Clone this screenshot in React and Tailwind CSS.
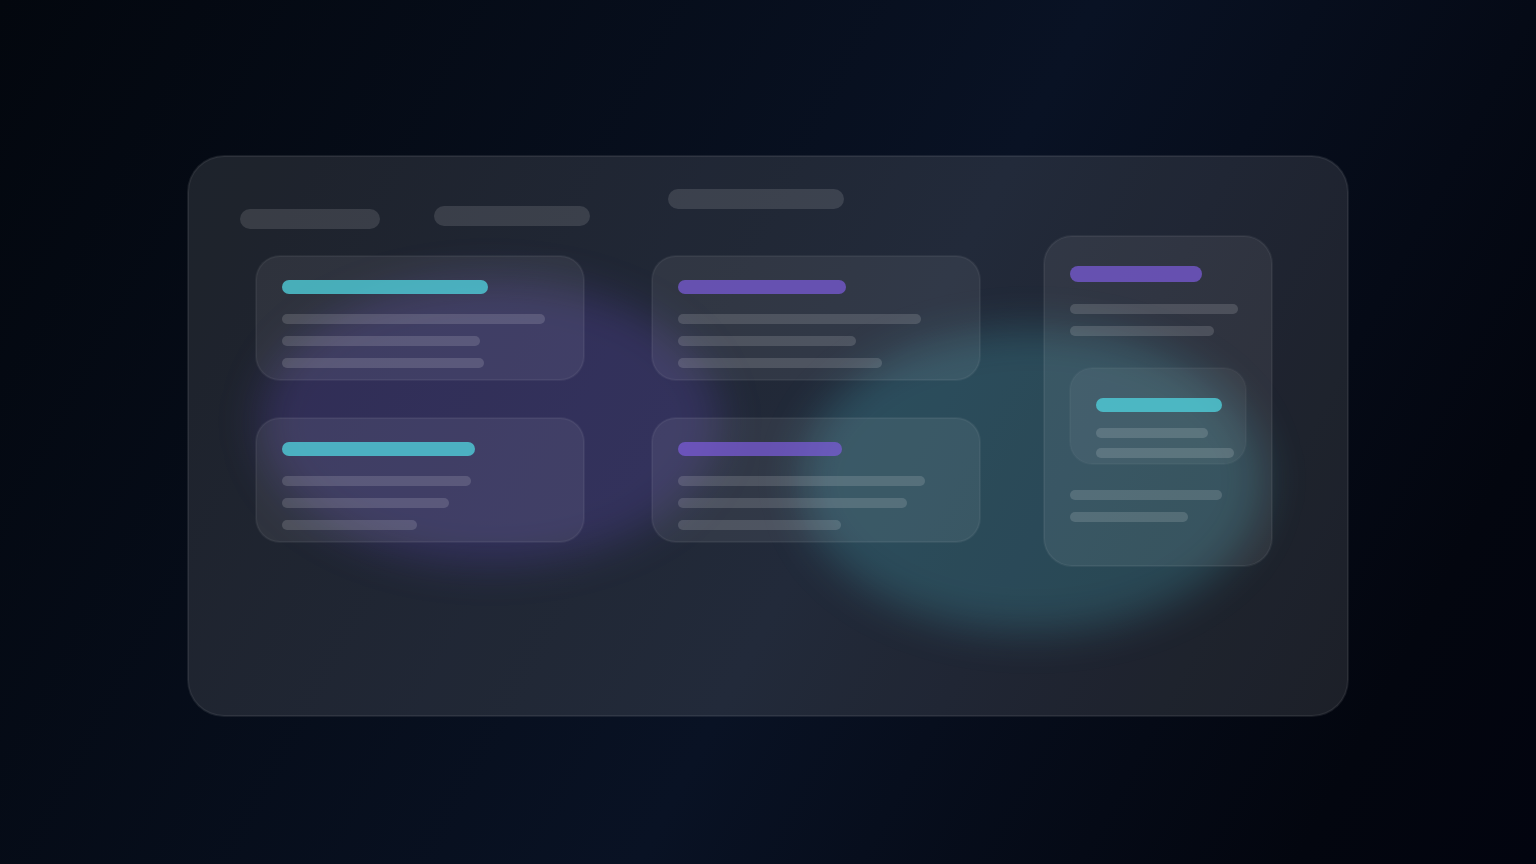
const bars = {
  cyan: "bg-[#4fd1dc]/78",
  purple: "bg-[#7c5cdb]/72",
  line: "bg-white/14",
};

function Bar({ tone = "line", className }) {
  return <div className={`rounded-full ${bars[tone]} ${className}`} />;
}

const cards = [
  { tone: "cyan", title: "w-[206px]", lines: ["w-[263px]", "w-[198px]", "w-[202px]"] },
  { tone: "purple", title: "w-[168px]", lines: ["w-[243px]", "w-[178px]", "w-[204px]"] },
  { tone: "cyan", title: "w-[193px]", lines: ["w-[189px]", "w-[167px]", "w-[135px]"] },
  { tone: "purple", title: "w-[164px]", lines: ["w-[247px]", "w-[229px]", "w-[163px]"] },
];

function Card({ tone, title, lines }) {
  return (
    <article className="h-[124px] rounded-3xl bg-white/7 px-[26px] pt-6 ring ring-white/5 inset-ring inset-ring-white/5">
      <Bar tone={tone} className={`h-3.5 ${title}`} />
      <div className="mt-5 flex flex-col gap-3">
        {lines.map((width) => (
          <Bar key={width} className={`h-2.5 ${width}`} />
        ))}
      </div>
    </article>
  );
}

function Sidebar() {
  return (
    <aside className="mt-[80px] h-[330px] w-[228px] shrink-0 rounded-[28px] bg-white/7 px-[26px] pt-[30px] ring ring-white/5 inset-ring inset-ring-white/6">
      <Bar tone="purple" className="h-4 w-[132px]" />
      <div className="mt-[22px] flex flex-col gap-3">
        <Bar className="h-2.5 w-[168px]" />
        <Bar className="h-2.5 w-[144px]" />
      </div>
      <div className="mt-8 h-24 rounded-[22px] bg-white/5 pt-[30px] pl-[26px] ring ring-white/3 inset-ring inset-ring-white/3">
        <Bar tone="cyan" className="h-3.5 w-[126px]" />
        <div className="mt-4 flex flex-col gap-2.5">
          <Bar className="h-2.5 w-[112px]" />
          <Bar className="h-2.5 w-[138px]" />
        </div>
      </div>
      <div className="mt-[26px] flex flex-col gap-3">
        <Bar className="h-2.5 w-[152px]" />
        <Bar className="h-2.5 w-[118px]" />
      </div>
    </aside>
  );
}

export default function App() {
  return (
    <main className="flex min-h-screen justify-center overflow-hidden bg-[linear-gradient(118deg,#03070e_0%,#091224_55%,#03060f_88%,#02040f_100%)] px-8 pt-[156px] pb-[148px]">
      <section className="relative isolate h-[560px] w-full max-w-[1160px] rounded-[36px] bg-white/10 ring ring-white/8 inset-ring inset-ring-white/7">
        <div className="absolute top-[124px] left-[72px] -z-10 h-[284px] w-[460px] rounded-[50%] bg-[#7c5cf6]/20 blur-[20px]" />
        <div className="absolute top-[172px] left-[612px] -z-10 h-[304px] w-[464px] rounded-[50%] bg-[#4fd1dc]/21 blur-[20px]" />
        <div className="flex justify-between pr-[76px] pl-[52px]">
          <div>
            <header className="flex h-[100px] items-start pt-[33px]">
              <div className="mt-5 h-5 w-[140px] rounded-full bg-white/12" />
              <div className="mt-[17px] ml-[54px] h-5 w-[156px] rounded-full bg-white/12" />
              <div className="ml-[78px] h-5 w-[176px] rounded-full bg-white/12" />
            </header>
            <div className="ml-4 grid grid-cols-[328px_328px] gap-x-[68px] gap-y-[38px]">
              {cards.map((card) => (
                <Card key={card.title} {...card} />
              ))}
            </div>
          </div>
          <Sidebar />
        </div>
      </section>
    </main>
  );
}
